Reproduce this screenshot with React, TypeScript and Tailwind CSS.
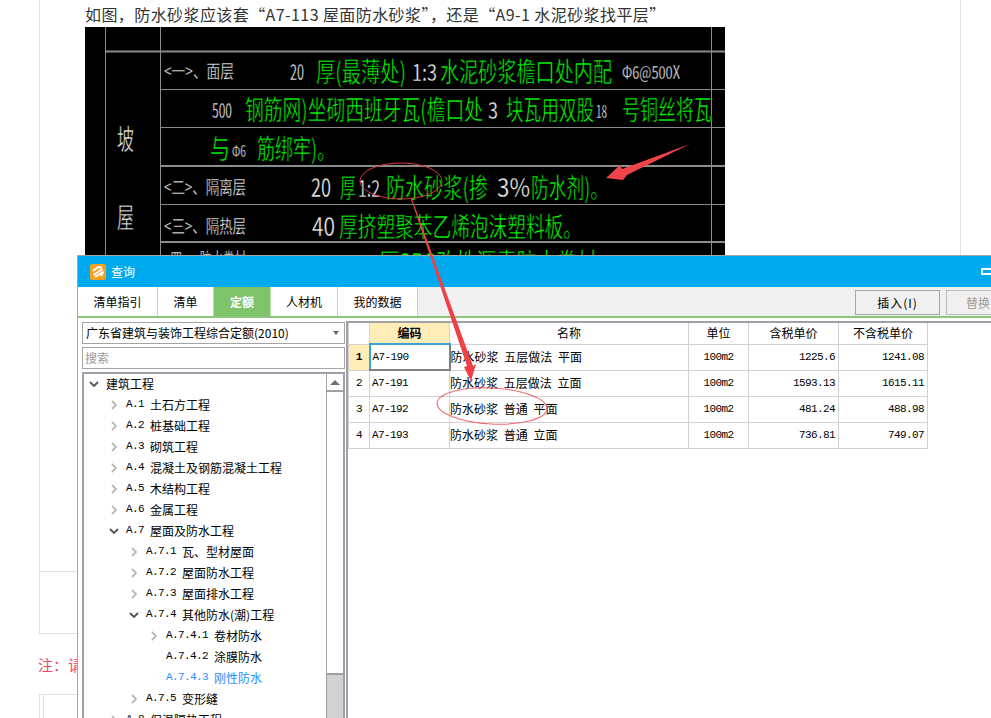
import React from 'react'

type CadText = { t: string; x: number; y: number; w: number; s: number; c?: string }

const GREEN = '#00ff00'
const WHITE = '#e8e8e8'
// the CAD lettering is tall and narrow: set it at 70% and stretch it upright
const CAD_SQUEEZE = 0.7

// coordinates are page pixels, the svg viewBox starts at the panel corner
const cadTexts: CadText[] = [
  { t: '<一>、面层', x: 164, y: 78, w: 70, s: 18, c: WHITE },
  { t: '20', x: 290, y: 80, w: 14, s: 22, c: WHITE },
  { t: '厚(最薄处)', x: 316, y: 82, w: 90, s: 27 },
  { t: '1:3', x: 412, y: 81, w: 25, s: 23, c: WHITE },
  { t: '水泥砂浆檐口处内配', x: 440, y: 82, w: 172, s: 27 },
  { t: 'Φ6@500X', x: 622, y: 79, w: 58, s: 18, c: WHITE },
  { t: '500', x: 212, y: 118, w: 20, s: 20, c: WHITE },
  { t: '钢筋网)坐砌西班牙瓦(檐口处', x: 245, y: 120, w: 238, s: 27 },
  { t: '3', x: 488, y: 119, w: 10, s: 24, c: WHITE },
  { t: '块瓦用双股', x: 506, y: 120, w: 88, s: 27 },
  { t: '18', x: 596, y: 118, w: 11, s: 18, c: WHITE },
  { t: '号铜丝将瓦', x: 622, y: 120, w: 90, s: 27 },
  { t: '与', x: 210, y: 159, w: 20, s: 27 },
  { t: 'Φ6', x: 232, y: 157, w: 14, s: 16, c: WHITE },
  { t: '筋绑牢)。', x: 257, y: 159, w: 78, s: 27 },
  { t: '<二>、隔离层', x: 164, y: 194, w: 82, s: 18, c: WHITE },
  { t: '20', x: 311, y: 197, w: 20, s: 26, c: WHITE },
  { t: '厚', x: 340, y: 198, w: 16, s: 27 },
  { t: '1:2', x: 358, y: 197, w: 22, s: 23, c: WHITE },
  { t: '防水砂浆(掺', x: 386, y: 198, w: 102, s: 27 },
  { t: '3%', x: 497, y: 197, w: 33, s: 26, c: WHITE },
  { t: '防水剂)。', x: 531, y: 198, w: 77, s: 27 },
  { t: '<三>、隔热层', x: 164, y: 233, w: 82, s: 18, c: WHITE },
  { t: '40', x: 312, y: 236, w: 23, s: 26, c: WHITE },
  { t: '厚挤塑聚苯乙烯泡沫塑料板。', x: 339, y: 237, w: 243, s: 27 },
  { t: '<四>、防水卷材', x: 164, y: 266, w: 82, s: 18, c: WHITE },
  { t: '厚SBS改性沥青防水卷材', x: 379, y: 273, w: 218, s: 27 },
]

function CadDrawing() {
  return (
    <svg width="640" height="228" viewBox="85 27 640 228" className="block shrink-0 bg-black">
      <g stroke="#8c8c8c" strokeWidth="1">
        <line x1="105.5" y1="27" x2="105.5" y2="255" />
        <line x1="160.5" y1="27" x2="160.5" y2="255" />
        <line x1="711.5" y1="27" x2="711.5" y2="255" />
        <line x1="105" y1="51.5" x2="725" y2="51.5" strokeWidth="2" />
        <line x1="160" y1="89.5" x2="725" y2="89.5" />
        <line x1="160" y1="127.5" x2="725" y2="127.5" />
        <line x1="160" y1="166" x2="725" y2="166" strokeWidth="2" />
        <line x1="160" y1="204.5" x2="725" y2="204.5" />
        <line x1="160" y1="242" x2="725" y2="242" strokeWidth="2" />
      </g>
      {/* black stroke on top of the fill thins the glyphs like the CAD font */}
      <g fontFamily="'Noto Sans CJK SC', sans-serif" stroke="#000000">
        <text x="117" y="150" fontSize="17" fill={WHITE} strokeWidth="0.3" transform="translate(0 150) scale(1 1.7) translate(0 -150)">坡</text>
        <text x="117" y="228" fontSize="17" fill={WHITE} strokeWidth="0.3" transform="translate(0 228) scale(1 1.7) translate(0 -228)">屋</text>
        {cadTexts.map((item, i) => (
          <text
            key={i}
            x={item.x}
            y={item.y}
            fontSize={item.s * CAD_SQUEEZE}
            fill={item.c ?? GREEN}
            strokeWidth={item.c ? 0.2 : 0.4}
            textLength={item.w}
            lengthAdjust="spacingAndGlyphs"
            transform={`translate(0 ${item.y}) scale(1 ${1 / CAD_SQUEEZE}) translate(0 ${-item.y})`}
          >
            {item.t}
          </text>
        ))}
      </g>
    </svg>
  )
}

function Chevron({ open }: { open?: boolean }) {
  if (open) {
    return (
      <svg width="10" height="6" viewBox="0 0 10 6" className="block">
        <path d="M1 1 L5 5 L9 1" fill="none" stroke="#555555" strokeWidth="1.8" />
      </svg>
    )
  }
  return (
    <svg width="6" height="10" viewBox="0 0 6 10" className="block">
      <path d="M1 1 L5 5 L1 9" fill="none" stroke="#b8b8b8" strokeWidth="1.8" />
    </svg>
  )
}

type TreeItem = { no?: string; label: string; level: number; icon?: 'open' | 'closed'; active?: boolean }

const treeItems: TreeItem[] = [
  { label: '建筑工程', level: 0, icon: 'open' },
  { no: 'A.1', label: '土石方工程', level: 1, icon: 'closed' },
  { no: 'A.2', label: '桩基础工程', level: 1, icon: 'closed' },
  { no: 'A.3', label: '砌筑工程', level: 1, icon: 'closed' },
  { no: 'A.4', label: '混凝土及钢筋混凝土工程', level: 1, icon: 'closed' },
  { no: 'A.5', label: '木结构工程', level: 1, icon: 'closed' },
  { no: 'A.6', label: '金属工程', level: 1, icon: 'closed' },
  { no: 'A.7', label: '屋面及防水工程', level: 1, icon: 'open' },
  { no: 'A.7.1', label: '瓦、型材屋面', level: 2, icon: 'closed' },
  { no: 'A.7.2', label: '屋面防水工程', level: 2, icon: 'closed' },
  { no: 'A.7.3', label: '屋面排水工程', level: 2, icon: 'closed' },
  { no: 'A.7.4', label: '其他防水(潮)工程', level: 2, icon: 'open' },
  { no: 'A.7.4.1', label: '卷材防水', level: 3, icon: 'closed' },
  { no: 'A.7.4.2', label: '涂膜防水', level: 3 },
  { no: 'A.7.4.3', label: '刚性防水', level: 3, active: true },
  { no: 'A.7.5', label: '变形缝', level: 2, icon: 'closed' },
  { no: 'A.8', label: '保温隔热工程', level: 1, icon: 'closed' },
]

const levelPad = ['pl-[4px]', 'pl-[24px]', 'pl-[44px]', 'pl-[64px]']

function TreeRow({ item }: { item: TreeItem }) {
  return (
    <div className={`flex h-[21px] items-center ${levelPad[item.level]} ${item.active ? 'text-[#1e90ff]' : 'text-black'}`}>
      <span className="flex w-[18px] shrink-0 items-center justify-start pl-[1px]">
        {item.icon === 'open' && <Chevron open />}
        {item.icon === 'closed' && <span className="pl-[2px]"><Chevron /></span>}
      </span>
      {item.no && (
        <span className="mr-[6px] font-['Liberation_Mono',monospace] text-[11px] tracking-[-0.6px]">{item.no}</span>
      )}
      <span>{item.label}</span>
    </div>
  )
}

const tabs = [
  { name: '清单指引', w: 'w-[80px]' },
  { name: '清单', w: 'w-[56px]' },
  { name: '定额', w: 'w-[57px]', active: true },
  { name: '人材机', w: 'w-[67px]' },
  { name: '我的数据', w: 'w-[80px]' },
]

const rows = [
  { code: 'A7-190', name: '防水砂浆 五层做法 平面', unit: '100m2', tax: '1225.6', noTax: '1241.08' },
  { code: 'A7-191', name: '防水砂浆 五层做法 立面', unit: '100m2', tax: '1593.13', noTax: '1615.11' },
  { code: 'A7-192', name: '防水砂浆 普通 平面', unit: '100m2', tax: '481.24', noTax: '488.98' },
  { code: 'A7-193', name: '防水砂浆 普通 立面', unit: '100m2', tax: '736.81', noTax: '749.07' },
]

const monoCell = "font-['Liberation_Mono',monospace] text-[11px] tracking-[-0.6px]"

function QuotaTable() {
  return (
    <table className="w-[579px] table-fixed border-collapse text-[12px] text-black">
      <colgroup>
        <col className="w-[21px]" />
        <col className="w-[80px]" />
        <col className="w-[239px]" />
        <col className="w-[60px]" />
        <col className="w-[90px]" />
        <col className="w-[89px]" />
      </colgroup>
      <thead>
        <tr className="h-[21px]">
          <th className="border border-t-0 border-[#d2d2d2] font-normal"></th>
          <th className="border border-t-0 border-[#d2d2d2] border-b-2 border-b-[#3fa0d8] bg-[#ffedb8] font-bold">编码</th>
          <th className="border border-t-0 border-[#d2d2d2] font-normal">名称</th>
          <th className="border border-t-0 border-[#d2d2d2] font-normal">单位</th>
          <th className="border border-t-0 border-[#d2d2d2] font-normal">含税单价</th>
          <th className="border border-t-0 border-[#d2d2d2] font-normal">不含税单价</th>
        </tr>
      </thead>
      <tbody>
        {rows.map((row, i) => (
          <tr key={row.code} className="h-[26px]">
            <td className={`border border-[#d2d2d2] text-center ${i === 0 ? 'bg-[#ffedb8] font-bold' : ''} ${monoCell}`}>{i + 1}</td>
            <td className={`border px-[2px] ${monoCell} ${i === 0 ? 'border-2 border-[#808080] border-l-[#3fa0d8] border-t-[#3fa0d8]' : 'border-[#d2d2d2]'}`}>{row.code}</td>
            <td className="border border-[#d2d2d2] px-0 [word-spacing:3px]">{row.name}</td>
            <td className={`border border-[#d2d2d2] text-center ${monoCell}`}>{row.unit}</td>
            <td className={`border border-[#d2d2d2] px-[3px] text-right ${monoCell}`}>{row.tax}</td>
            <td className={`border border-[#d2d2d2] px-[3px] text-right ${monoCell}`}>{row.noTax}</td>
          </tr>
        ))}
      </tbody>
    </table>
  )
}

function AppLogo() {
  return (
    <svg width="16" height="16" viewBox="0 0 16 16" className="block shrink-0">
      <rect width="16" height="16" rx="2.5" fill="#f7a01c" />
      <path d="M3 7 L8 3 L12 3.5 M3.5 11 L12.5 5 M5 13 L13 8 L11 12" fill="none" stroke="#ffffff" strokeWidth="2" strokeLinejoin="round" />
    </svg>
  )
}

function QueryDialog() {
  return (
    <div className="absolute left-[77px] top-[255px] flex h-[463px] w-[1000px] flex-col border-l border-t border-[#a4a4a4] bg-white text-[12px]">
      <div className="flex h-[31px] shrink-0 items-center bg-[#00aaef] pl-[12px]">
        <AppLogo />
        <span className="ml-[5px] shrink-0 whitespace-nowrap text-white">查询</span>
        <span className="ml-[846px] block h-[7px] w-[12px] shrink-0 border-2 border-white"></span>
      </div>
      <div className="flex h-[31px] shrink-0 border-b-2 border-[#8cc67a] bg-[#f0f0f0]">
        {tabs.map(tab => (
          <div
            key={tab.name}
            className={`flex shrink-0 items-center justify-center border-r border-[#b9dfae] ${tab.w} ${tab.active ? 'bg-[#7ec46b] font-bold text-white' : 'bg-white text-black'}`}
          >
            {tab.name}
          </div>
        ))}
        <div className="ml-[437px] mt-[3px] flex h-[25px] w-[85px] shrink-0 items-center justify-center border border-[#a6a6a6] tracking-[1px] text-black">插入(I)</div>
        <div className="ml-[6px] mt-[3px] flex h-[25px] w-[85px] shrink-0 items-center justify-start border border-[#bdbdbd] pl-[19px] text-[#9c9c9c]">替换</div>
      </div>
      <div className="flex min-h-0 flex-1 pl-[4px] pt-[3px]">
        <div className="flex w-[263px] shrink-0 flex-col gap-[3px] pt-[1px]">
          <div className="flex h-[22px] shrink-0 items-center justify-between border border-[#a4a4a4] pl-[3px] pr-[5px]">
            <span>广东省建筑与装饰工程综合定额(2010)</span>
            <span className="h-0 w-0 border-x-[3px] border-t-[4px] border-x-transparent border-t-[#666666]"></span>
          </div>
          <div className="flex h-[22px] shrink-0 items-center border border-[#a4a4a4] pl-[2px] text-[#9a9a9a]">搜索</div>
          <div className="flex min-h-0 flex-1 overflow-hidden border-2 border-b-0 border-[#a0a0a8]">
            <div className="-mt-px min-w-0 flex-1 overflow-hidden">
              {treeItems.map(item => (
                <TreeRow key={item.label} item={item} />
              ))}
            </div>
            <div className="flex w-[17px] shrink-0 flex-col border-l border-[#a0a0a0]">
              <div className="flex h-[18px] items-center justify-center border-b-2 border-[#a0a0a0]">
                <span className="h-0 w-0 border-x-[5px] border-b-[5px] border-x-transparent border-b-[#6e6e78]"></span>
              </div>
              <div className="h-[283px] border-b-2 border-[#a0a0a0]"></div>
              <div className="flex-1 bg-[#d2d2d2]"></div>
            </div>
          </div>
        </div>
        <div className="ml-px min-w-0 flex-1 border-l-2 border-t-2 border-[#a0a0a8]">
          <QuotaTable />
        </div>
      </div>
    </div>
  )
}

function Annotations() {
  return (
    <svg width="991" height="718" viewBox="0 0 991 718" className="pointer-events-none absolute left-0 top-0">
      <ellipse cx="401" cy="181" rx="41" ry="18" fill="none" stroke="#d8383c" strokeWidth="1" />
      <ellipse cx="492" cy="406" rx="55" ry="18" fill="none" stroke="#ee6a6e" strokeWidth="1" transform="rotate(3 492 406)" />
      <polygon points="606,178 620,165 622,169 690,144 627,175 623,180" fill="#f0444a" />
      <polygon points="411,199 412,199 473,366 476,364 471,381 464,367 467,366" fill="#ee4045" />
    </svg>
  )
}

export default function App() {
  return (
    <div className="relative h-[718px] w-[991px] overflow-hidden bg-white font-['Noto_Sans_CJK_SC',sans-serif]">
      <div className="ml-[39px] flex h-[634px] w-[922px] flex-col border-x border-b border-[#e2e2e2] pl-[45px]">
        <p className="h-[27px] shrink-0 text-[16px] leading-[28px] tracking-[0.42px] text-[#333333]">如图，防水砂浆应该套“A7-113 屋面防水砂浆”，还是“A9-1 水泥砂浆找平层”</p>
        <CadDrawing />
        <div className="-ml-[45px] mt-auto h-[62px] border-t border-[#e2e2e2]"></div>
      </div>
      <div className="ml-[38px] mt-[19px] h-[24px] text-[15px] leading-[24px] text-[#f5476a]">注：请</div>
      <div className="ml-[39px] mt-[17px] h-[40px] w-[60px] border border-[#e2e2e2] pl-[3px]">
        <div className="h-full border-l border-[#e2e2e2]"></div>
      </div>
      <QueryDialog />
      <Annotations />
    </div>
  )
}
